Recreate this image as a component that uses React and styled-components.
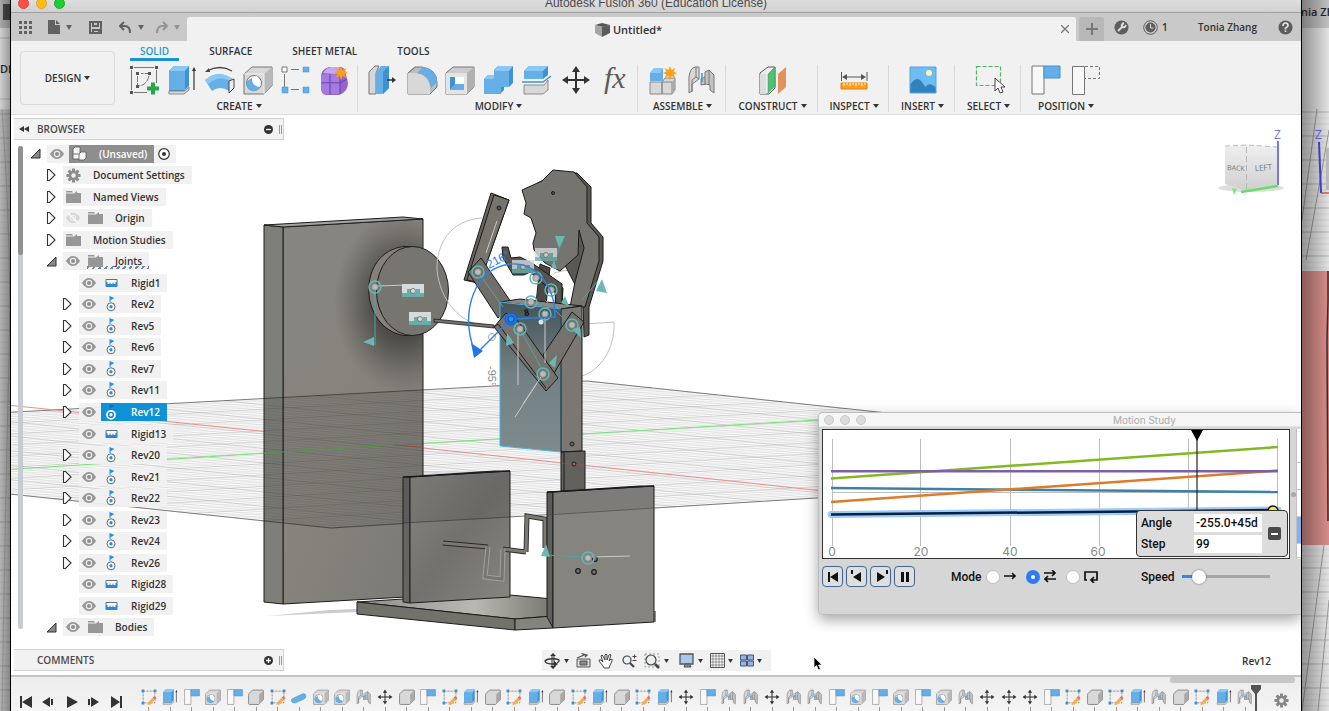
import React from "react";
import styled, { createGlobalStyle, css } from "styled-components";

const Global = createGlobalStyle`
  *, *::before, *::after { box-sizing: border-box; }
  html, body { margin: 0; height: 100%; overflow: hidden; }
  body { font-family: "Open Sans", "Noto Sans", sans-serif; font-size: 10px; font-weight: 600; color: #333; background: #a8a8a8; }
  button { font: inherit; color: inherit; background: none; border: 0; padding: 0; margin: 0; }
  svg { display: block; flex: none; }
  ul { list-style: none; margin: 0; padding: 0; }
`;

/* ---------- page frame ---------- */
const Desktop = styled.div`
  display: grid;
  grid-template-columns: 11px minmax(0, 1fr) 28px;
  height: 100vh;
  overflow: hidden;
`;
const Behind = styled.div`
  position: relative;
  overflow: hidden;
  white-space: nowrap;
  font-size: 11px;
  background: #b4b4b4;
  ${(p) => p.$side === "left"
    ? css`border-right: 1px solid #000;`
    : css`border-left: 1px solid #000;`}
`;
const BehindDrawing = styled.svg`
  width: 100%;
  height: 100%;
`;
const BehindText = styled.span`
  position: absolute;
  top: ${(p) => p.$top}px;
  ${(p) => p.$side}: ${(p) => p.$offset}px;
  line-height: 16px;
  color: #222;
`;
const AppWindow = styled.main`
  display: flex;
  flex-direction: column;
  min-width: 0;
  background: #fff;
`;
const TitleBar = styled.header`
  flex: none;
  display: grid;
  grid-template-columns: 1fr auto 1fr;
  grid-template-rows: 12px;
  align-items: end;
  height: 13px;
  overflow: hidden;
  border-bottom: 1px solid #a0a0a0;
  background: linear-gradient(#dedede, #d0d0d0);
  font: 400 12px/17px "Liberation Sans", Arial, sans-serif;
  color: #4a4a4a;
`;
const Lights = styled.div`
  display: flex;
  gap: ${(p) => p.$gap}px;
  padding-left: 7px;
  align-self: center;
`;
const Light = styled.button`
  width: 11px;
  height: 11px;
  border-radius: 50%;
  background: ${(p) => p.$color};
  border: 1px solid ${(p) => p.$edge};
`;
const TitleLights = styled(Lights)`
  align-self: end;
  padding-bottom: 3px;
`;

/* ---------- document tab strip ---------- */
const Strip = styled.div`
  flex: none;
  display: flex;
  align-items: flex-end;
  height: 28px;
  background: #c9c9c9;
`;
const Quick = styled.div`
  display: flex;
  align-items: center;
  width: 176px;
  height: 28px;
  padding-left: 6px;
  gap: 2px;
`;
const IconButton = styled.button`
  display: flex;
  align-items: center;
  justify-content: center;
  width: ${(p) => p.$w || 16}px;
  height: 24px;
  margin-right: ${(p) => p.$after || 0}px;
  opacity: ${(p) => (p.$dim ? 0.5 : 1)};
`;
const DocTab = styled.div`
  flex: 1;
  display: grid;
  grid-template-columns: 1fr auto 1fr;
  align-items: center;
  height: 24px;
  border-radius: 3px 3px 0 0;
  background: #f1f1f1;
  font-size: 11px;
  padding-right: 6px;
`;
const DocName = styled.span`
  grid-column: 2;
  display: flex;
  align-items: center;
  gap: 3px;
`;
const CloseTab = styled(IconButton)`
  justify-self: end;
  width: 10px;
`;
const NewTab = styled(IconButton)`
  width: 25px;
  margin-left: 3px;
  border-radius: 3px 3px 0 0;
  background: #b8b8b8;
`;
const Account = styled.div`
  display: flex;
  align-items: center;
  height: 28px;
  width: 197px;
  padding-left: 10px;
`;
const Jobs = styled.button`
  display: flex;
  align-items: center;
  gap: 4px;
  margin-left: 14px;
`;
const UserName = styled.button`
  margin: 0 21px 0 auto;
`;

/* ---------- ribbon ---------- */
const Ribbon = styled.div`
  flex: none;
  display: flex;
  height: 74px;
  padding: 2px 0 0 9px;
  background: #f1f1f1;
  border-bottom: 1px solid #dcdcdc;
`;
const Workspace = styled.button`
  width: 95px;
  height: 54px;
  margin: 8px 4px 0 0;
  border: 1px solid #d9d9d9;
  border-radius: 4px;
`;
const RibbonMain = styled.div`
  display: flex;
  flex-direction: column;
  min-width: 0;
`;
const TabList = styled.nav`
  display: flex;
  gap: 20px;
  padding-left: 11px;
`;
const RibbonTab = styled.button`
  height: 18px;
  line-height: 16px;
  padding: 0 10px;
  color: ${(p) => (p.$on ? "#2a9ad6" : "#333")};
  border-bottom: 3px solid ${(p) => (p.$on ? "#1b93d3" : "transparent")};
`;
const Groups = styled.div`
  display: flex;
`;
const Group = styled.section`
  flex: none;
  width: ${(p) => p.$w}px;
  height: 47px;
  margin-top: 4px;
  padding: 0 8px 0 10px;
  border-right: ${(p) => (p.$last ? 0 : 1)}px solid #d9d9d9;
`;
const Tools = styled.div`
  display: flex;
  justify-content: ${(p) => (p.$single ? "center" : "space-between")};
`;
const Tool = styled.button`
  width: 30px;
  height: 30px;
`;
const GroupMenu = styled.button`
  display: block;
  margin: 4px auto 0;
  height: 14px;
  line-height: 14px;
  white-space: nowrap;
`;

/* ---------- viewport ---------- */
const Viewport = styled.div`
  flex: 1;
  min-height: 0;
  position: relative;
  display: flex;
  justify-content: space-between;
  overflow: hidden;
`;
const SceneSvg = styled.svg`
  position: absolute;
  inset: 0;
  width: 100%;
  height: 100%;
`;
const SidePanel = styled.aside`
  position: relative;
  display: flex;
  flex-direction: column;
  width: 270px;
  margin-left: 3px;
  padding: 3px 0 4px;
`;
const PanelBar = styled.div`
  flex: none;
  display: flex;
  align-items: center;
  height: 22px;
  padding: 0 1px 0 5px;
  background: #f2f2f2;
  border: 1px solid #d2d2d2;
  border-width: 1px 1px 1px 0;
  color: #4a4a4a;
`;
const PanelTitle = styled.span`
  flex: 1;
  padding-left: ${(p) => (p.$indent ? 18 : 8)}px;
`;
const Grip = styled.span`
  width: 3px;
  height: 9px;
  margin-left: 6px;
  border: 1px solid #9a9a9a;
  border-width: 0 1px;
`;
const TreeArea = styled.div`
  flex: 1;
  display: flex;
  gap: 7px;
  min-height: 0;
  padding: 3px 0 11px 4px;
`;
const ScrollTrack = styled.div`
  width: 5px;
  margin: 3px 0 9px;
  border-radius: 3px;
  background: #c8cbcf;
`;
const ScrollThumb = styled.div`
  height: 109px;
  border-radius: 3px;
  background: #8f9092;
`;
const Tree = styled.ul`
  flex: 1;
  display: grid;
  grid-auto-rows: 1fr;
`;
const Row = styled.li`
  display: flex;
  align-items: center;
  padding-left: ${(p) => p.$level * 16}px;
`;
const Expander = styled.span`
  width: 17px;
  display: flex;
`;
const Chip = styled.span`
  display: flex;
  align-items: center;
  height: 18px;
  background: rgba(240, 240, 240, 0.94);
`;
const Eye = styled.button`
  width: 14px;
  margin: 0 5px 0 3px;
  opacity: ${(p) => (p.$off ? 0.3 : 1)};
`;
const NodeName = styled.button`
  display: flex;
  align-items: center;
  gap: 12px;
  height: 18px;
  padding: 0 7px 0 3px;
  white-space: nowrap;
  color: ${(p) => (p.$bg ? "#fff" : "#333")};
  background: ${(p) => p.$bg || "none"};
  ${(p) => p.$dotted && css`
    background: repeating-linear-gradient(-55deg, #6f82b6 0 2px, transparent 2px 5px) 2px 14px / 62px 3px no-repeat;
  `}
`;
const Activate = styled.button`
  margin: 0 6px 0 4px;
`;
const NavBar = styled.div`
  position: absolute;
  left: 531px;
  bottom: 4px;
  display: flex;
  align-items: center;
  gap: 7px;
  height: 21px;
  padding: 0 9px 0 2px;
  background: #f1f1f1;
`;
const NavButton = styled.button`
  display: flex;
  align-items: center;
  gap: 3px;
`;
const CornerStack = styled.div`
  position: relative;
  display: flex;
  flex-direction: column;
  justify-content: space-between;
  align-items: flex-end;
  padding: 10px 14px 7px 0;
`;
const SelectionName = styled.span`
  padding-right: 16px;
`;
const Pointer = styled.svg`
  position: absolute;
  left: 802px;
  bottom: 4px;
`;

/* ---------- motion study window ---------- */
const Study = styled.section`
  position: absolute;
  top: 297px;
  right: 0;
  width: 483px;
  height: 203px;
  overflow: hidden;
  border: 1px solid #bbb;
  border-right: 0;
  border-radius: 5px 0 0 5px;
  background: #d6d6d6;
  font: 500 12px/16px Roboto, sans-serif;
  color: #111;
`;
const StudyShadow = styled.div`
  position: absolute;
  top: 297px;
  right: 0;
  width: 483px;
  height: 203px;
  border-radius: 5px;
  box-shadow: 0 5px 14px rgba(0, 0, 0, 0.35);
`;
const StudyTitle = styled.header`
  display: flex;
  align-items: center;
  height: 14px;
  background: #f6f6f6;
  border-bottom: 1px solid #e2e2e2;
  font-family: Inter, sans-serif;
  font-size: 10px;
  font-weight: 400;
  color: #aaa;
`;
const StudyLights = styled(Lights)`
  padding-left: 5px;
`;
const StudyLight = styled(Light)`
  width: 10px;
  height: 10px;
`;
const StudyName = styled.span`
  margin-left: 247px;
`;
const StudyBody = styled.div`
  display: flex;
  margin: 2px 0 7px 3px;
`;
const ChartBox = styled.div`
  position: relative;
  width: 468px;
  height: 130px;
  border: 1px solid #333;
  background: #fff;
`;
const Splitter = styled.div`
  display: flex;
  align-items: center;
  justify-content: center;
  width: 6px;
  &::before { content: ""; width: 5px; height: 5px; border-radius: 50%; background: #a8a8a8; }
`;
const JointList = styled.div`
  flex: 1;
  display: grid;
  grid-template-rows: 34px 27px 27px 27px 14px;
  background: #fff;
  border-left: 1px solid #c0c0c0;
`;
const JointSlot = styled.div`
  border-bottom: 1px solid #ccc;
  background: ${(p) => (p.$on ? "#7db4ee" : "#fff")};
`;
const StepPopup = styled.form`
  position: absolute;
  right: 1px;
  bottom: 1px;
  display: grid;
  grid-template-columns: 53px 68px 1fr;
  grid-template-rows: 18px 18px;
  row-gap: 3px;
  align-items: center;
  width: 152px;
  height: 47px;
  padding: 3px 6px 3px 4px;
  border: 1px solid #333;
  border-radius: 4px;
  background: #dcdcdc;
`;
const Field = styled.input`
  grid-column: 2;
  width: 68px;
  height: 18px;
  padding: 0 2px;
  border: 0;
  border-radius: 0;
  background: #fff;
  font: inherit;
  color: #111;
`;
const RemoveStep = styled.button`
  grid-column: 3;
  grid-row: 1 / 3;
  justify-self: end;
  display: flex;
  align-items: center;
  justify-content: center;
  width: 13px;
  height: 13px;
  border-radius: 2px;
  background: #4a4a4a;
`;
const StudyControls = styled.div`
  display: flex;
  align-items: center;
  padding-left: 3px;
`;
const PlayButton = styled.button`
  display: flex;
  align-items: center;
  justify-content: center;
  width: 21px;
  height: 21px;
  margin-right: 3px;
  border: 1px solid #41658f;
  border-radius: 4px;
  background: #dedede;
`;
const ModeSet = styled.div`
  display: flex;
  align-items: center;
  margin: 0 35px 0 33px;
`;
const ModeName = styled.span`
  width: 35px;
`;
const ModeOption = styled.label`
  display: flex;
  align-items: center;
  gap: 4px;
  width: 40px;
`;
const Radio = styled.input`
  appearance: none;
  flex: none;
  width: 14px;
  height: 14px;
  margin: 0;
  border-radius: 50%;
  border: 1px solid #c0c0c0;
  background: #fff;
  &:checked { border: 5px solid #2f7bf6; }
`;
const SpeedLabel = styled.label`
  display: flex;
  align-items: center;
  gap: 7px;
`;
const Speed = styled.input`
  appearance: none;
  width: 88px;
  height: 14px;
  margin: 0;
  background: linear-gradient(90deg, #3b82f6 20%, #a6a6a6 20%) center / 100% 3px no-repeat;
  &::-webkit-slider-thumb {
    appearance: none;
    width: 14px;
    height: 14px;
    border-radius: 50%;
    background: #fff;
    box-shadow: 0 0 2px rgba(0, 0, 0, 0.6);
  }
`;

/* ---------- timeline ---------- */
const Timeline = styled.footer`
  flex: none;
  position: relative;
  display: flex;
  height: 36px;
  padding: 0 12px 0 7px;
  background: linear-gradient(#ececec, #f4f4f4);
  border-top: 2px solid #c4c4c4;
  overflow: hidden;
`;
const Transport = styled.div`
  display: flex;
  justify-content: space-between;
  width: 120px;
  padding: 13px 13px 0 0;
`;
const Features = styled.div`
  flex: 1;
  display: flex;
  padding-top: 12px;
`;
const Feature = styled.button`
  flex: 1;
  display: flex;
  flex-direction: column;
  align-items: center;
  min-width: 0;
  &::after { content: ""; width: 1px; height: 6px; margin-top: 2px; background: #999; }
`;
const Marker = styled.svg`
  margin: 8px 0 0 -5px;
`;
const TimelineGear = styled.button`
  padding-top: 12px;
  margin-left: auto;
`;
const TimelineScroll = styled.div`
  position: absolute;
  top: 0;
  right: 6px;
  width: 125px;
  height: 6px;
  border-radius: 3px;
  background: #c6c6c6;
`;
const TimelineEnd = styled.div`
  display: flex;
  width: 33px;
  flex: none;
`;

/* ---------- small shared drawings ---------- */
const Caret = ({ s = 6, c = "#333" }) => (
  <svg width={s} height={s - 1} viewBox="0 0 6 5"><path d="M0 0h6L3 5z" fill={c} /></svg>
);
const InlineCaret = styled.i`
  display: inline-block;
  margin-left: 3px;
  vertical-align: 2px;
  border: solid transparent;
  border-width: 4px 3px 0;
  border-top-color: #333;
`;
const Gear = ({ s = 14, c = "#8d8d8d" }) => (
  <svg width={s} height={s} viewBox="0 0 16 16">
    {[0, 45, 90, 135].map((a) => <rect key={a} x="6.4" y="0.5" width="3.2" height="15" rx="0.6" fill={c} transform={`rotate(${a} 8 8)`} />)}
    <circle cx="8" cy="8" r="5.2" fill={c} /><circle cx="8" cy="8" r="2.4" fill="#f1f1f1" />
  </svg>
);
const Folder = () => (
  <svg width="15" height="12" viewBox="0 0 15 12"><path d="M0 0h6l1 1.500H0zM0 2.500h8l3-2.500v2h4v10H0z" fill="#979797" /></svg>
);
const EyeIcon = ({ off }) => (
  <svg width="14" height="12" viewBox="0 0 14 12">
    <path d="M0 6Q3 1 7 1t7 5q-3 5-7 5T0 6z" fill="#979797" /><circle cx="7" cy="6" r="3.2" fill="#eee" /><circle cx="7" cy="6" r="2" fill="#8d8d8d" />
    {off && <path d="M1 0l12 12" stroke="#fff" strokeWidth="2" />}
  </svg>
);
const RigidIcon = () => (
  <svg width="15" height="14" viewBox="0 0 15 14"><path d="M2 3.500h11v7H2z" fill="#fff" stroke="#5a7086" /><path d="M2 6h1.500v2h2V6.500h1V8h2V6.500h1V8h2V6H13v5H2z" fill="#2f86d6" /></svg>
);
const RevIcon = ({ on }) => (
  <svg width="15" height="16" viewBox="0 0 15 16">
    <path d="M5.500 0L10.500 2 6.500 4.200V6h-1z" fill={on ? "#0a6fc0" : "#1e90f0"} />
    <circle cx="7" cy="10.800" r="4" fill={on ? "#0d7cc4" : "#fff"} stroke={on ? "#fff" : "#666"} strokeWidth={on ? 1.8 : 1} />
    <circle cx="7" cy="10.800" r="1.700" fill={on ? "#fff" : "#1e90f0"} />
  </svg>
);
const DocIcon = () => (
  <svg width="15" height="15" viewBox="0 0 15 15" fill="#f4f4f4" stroke="#555" strokeWidth=".8">
    <path d="M1 3l2-2h5v11l-1 1H1z" /><path d="M7 8l2-2h5v6l-2 2H7z" /><path d="M1 8h6" fill="none" />
  </svg>
);

/* ---------- tool drawings, 30 by 30 ---------- */
const B = "#66aee6", B2 = "#3f92d2", B3 = "#8cc8f5", G = "#d8d8d8", K = "#777";
const star = (x, y) => (
  <path transform={`translate(${x} ${y})`} d="M0-7L1.600-3 5.500-5 3.600-1.400 7 0 3.600 1.400 5.500 5 1.600 3 0 7-1.600 3-5.500 5-3.600 1.400-7 0-3.600-1.400-5.500-5-1.600-3z" fill="#f9a01b" />
);
const art = {
  sketch: <g fill="none" stroke={K}><path d="M5 2.500h20M2.500 5v20M27.500 5v13M5 27.500h13" /><path d="M8.500 11v10q10 0 12-12.500H12" strokeDasharray="6 1" />
    <g fill="#555" stroke="none"><path d="M1 1h3v3H1zM26 1h3v3h-3zM1 26h3v3H1zM7 7h3v3H7zM19 7h3v3h-3zM7 20h3v3H7z" /><path d="M22 17.500h4v4h4v4h-4v4h-4v-4h-4v-4h4z" fill="#25a84a" /></g></g>,
  extrude: <g><path d="M2 6l5-5h15v20l-5 5H2z" fill={B2} /><path d="M2 6h16v19H2z" fill={B} /><path d="M2 6l5-5h15l-4 5z" fill={B3} /><path d="M2 26h16l4-4v3l-5 4H2z" fill={G} stroke={K} strokeWidth=".8" /><path d="M27 25V4" stroke="#333" strokeWidth="1.200" /><path d="M25 6l2-4 2 4z" fill="#333" /></g>,
  revolve: <g><path d="M2 6Q15-1 27 6" fill="none" stroke="#444" strokeWidth="1.300" /><path d="M0 7l4-4 1 4z" fill="#444" /><path d="M0 15Q14 3 29 15l-5 11Q15 20 7 26z" fill={B} /><path d="M0 15Q14 3 29 15l-2 2Q14 9 3 19z" fill={B3} /><path d="M24 16l5-2v9l-5 5z" fill="#eee" stroke="#444" /></g>,
  hole: <g><path d="M1 9l8-7h20v19l-8 8H1z" fill={G} stroke={K} /><path d="M21 9l8-7v19l-8 8z" fill="#b9b9b9" /><path d="M1 9h20v20" fill="none" stroke="#eee" /><circle cx="11" cy="18" r="7.500" fill="#eee" stroke={K} /><path d="M4 16a7 7 0 1 0 13 6q-8-1-8-9z" fill={B} /><path d="M9 13a8 8 0 0 0 8 9l1-5-4-6z" fill="#fff" /></g>,
  pattern: <g stroke={K}><path d="M3.500 9v13M10 4.500h8M10 24.500h8" /><path d="M1 2h5v5H1z" fill="#fff" /><g fill={B} stroke={B2} strokeWidth=".5"><path d="M22 2h6v5h-6zM1 22h6v6H1zM22 22h6v6h-6z" /></g></g>,
  form: <g><path d="M2 10q1-6 8-8h12q5 1 5 8l2 8q0 6-5 10l-4 2H7q-5-1-5-7z" fill="#9363cf" /><path d="M2 10q6-2 19 0v19H7q-5-1-5-7z" fill="#a67be0" /><path d="M4 8q3-5 8-6h9q-2 6-4 7z" fill="#c7a8f2" /><path d="M11 9v20M2 18q9-1 19 0l7-4M21 10v19" fill="none" stroke="#6f46ad" strokeWidth="1.200" />{star(22, 8)}</g>,
  press: <g><path d="M1 7l6-6h4L8 8v21H1z" fill={G} stroke={K} /><path d="M8 7l5-6h8v22l-6 6H8z" fill={B} /><path d="M15 7l6-6v22l-6 6z" fill={B2} /><path d="M19 15h7" stroke="#333" strokeWidth="1.500" /><path d="M24 12l4 3-4 3z" fill="#333" /></g>,
  fillet: <g><path d="M1 8l7-6h7q15 2 15 16v4l-7 7H1z" fill="#bdbdbd" stroke={K} /><path d="M1 8h8q13 2 14 15v6H1z" fill={G} /><path d="M10 8l6-6q13 2 14 15l-6 6Q22 10 10 8z" fill={B} /><path d="M1 8l7-6" stroke={K} /></g>,
  shell: <g><path d="M1 8l7-6h21v20l-7 7H1z" fill="#ccc" stroke={K} /><path d="M22 8l7-6v20l-7 7z" fill="#b0b0b0" /><path d="M1 8h21v21H1z" fill="#e4e4e4" /><path d="M5 12h14v13H5z" fill="#fff" /><path d="M5 12h5v8l-5 5z" fill={B2} /><path d="M10 19h9v6H5z" fill={B} /></g>,
  combine: <g><path d="M0 14l4-4h6V5l4-4h15v17l-4 4h-5v3l-4 4H0z" fill={B2} /><path d="M0 14h10V6h15v16H17v7H0z" fill={B} /><path d="M10 6l4-5h15l-4 5zM0 14l4-4h6v4z" fill={B3} /></g>,
  split: <g><path d="M2 6l5-5h19v9l-5 4H2z" fill={B2} /><path d="M2 6h19v8H2z" fill={B} /><path d="M2 6l5-5h19l-5 5z" fill={B3} /><path d="M0 17h21l8-6" fill="none" stroke={B2} strokeWidth="1.300" /><path d="M2 20h20l4-5v10l-5 4H2z" fill={G} stroke={K} strokeWidth=".8" /></g>,
  move: <g fill="#333"><path d="M14 5h2v20h-2z" /><path d="M5 14h20v2H5z" /><path d="M15 1l4 6h-8zM15 29l4-6h-8zM1 15l6-4v8zM29 15l-6-4v8z" /></g>,
  fx: <text x="5" y="23" fontFamily="Liberation Serif, serif" fontStyle="italic" fontSize="30" fontWeight="400" fill="#5c5c5c">fx</text>,
  assemble: <g><path d="M2 8l4-5h9v13H2z" fill={B} /><path d="M2 8l4-5h9l-3 5z" fill={B3} /><path d="M2 17h12v12H2zM14 17l3-4h10v12l-3 4H14z" fill={G} stroke="#888" /><path d="M14 17h10v12" fill="none" stroke="#888" /><path d="M24 17l3-4v12l-3 4z" fill="#aaa" />{star(22, 8)}</g>,
  joint: <g stroke="#777"><path d="M2 12Q3 3 8 2h4v12l-4 3-3 2v7l-3 2z" fill={G} /><path d="M9 2v10l-4 3v12M9 12l3 2" fill="none" /><path d="M14 14l4-2V7l4-2 5 5v18l-4-3v-5l-4-1-5 1z" fill="#c4c4c4" /><path d="M18 12v8M22 5v15" fill="none" /><path d="M15 17V8" stroke={B2} strokeWidth="1.500" fill="none" /></g>,
  construct: <g><path d="M2 8l8-6h7v21l-6 6H2z" fill="#eee" stroke="#555" /><path d="M2 9h6v20H2z" fill="#ddd" /><path d="M10 9l7-7v19l-7 7z" fill="#53be76" stroke="#35995a" strokeWidth=".5" /><path d="M20 9l8-7v20l-8 7z" fill="#e3915d" /></g>,
  inspect: <g stroke="#555"><path d="M2.500 7v9M28 7v9M5 12h20" /><path d="M3 12l5-3v6zM27 12l-5-3v6z" fill="#555" stroke="none" /><path d="M2 18h26v6H2z" fill="#fa9f1e" stroke="#e08500" /><path d="M5 18v3M8 18v2M11 18v3M14 18v2M17 18v3M20 18v2M23 18v3M26 18v2" stroke="#fff" strokeWidth="1" /></g>,
  insert: <g><path d="M2 2h26v26H2z" fill="#6dbdf3" /><circle cx="21" cy="8" r="3" fill="#fff5b8" /><path d="M2 20q8-13 15 2 5-6 11 1v5H2z" fill="#3183bd" /><path d="M2 2h26v26H2z" fill="none" stroke="#5da3d2" /></g>,
  select: <g><path d="M2.500 1.500h24v19h-24z" fill="none" stroke="#4db45b" strokeWidth="1.200" strokeDasharray="4 2" /><path d="M21 13v13l3-3 2 5 3-1-2-5h4z" fill="#fff" stroke="#444" /></g>,
  position: <g><path d="M1 1h12v28H1z" fill="#f8f8f8" stroke={K} /><path d="M13 1h16v12H13z" fill={B} stroke={B2} /></g>,
  revert: <g><path d="M1.500 1.500h12v28h-12z" fill="#f8f8f8" stroke={K} /><path d="M14 1.500h14.500v12H14" fill="none" stroke={K} strokeDasharray="3 2" /></g>,
  body: <g><path d="M1 12q0-4 3-6l5-4h19q1 0 1 2v16l-9 9H3q-2 0-2-2z" fill={G} stroke={K} strokeWidth="1.500" /><path d="M21 10l8-7v17l-8 8z" fill="#aaa" /></g>,
  tsketch: <g><path d="M4 4h22v22H4z" fill="none" stroke={K} strokeDasharray="4 2" strokeWidth="1.500" /><g fill={B2}><path d="M1 1h5v5H1zM24 1h5v5h-5zM1 24h5v5H1z" /></g><path d="M14 25l8-9 4 4-8 9-6 1z" fill="#f4b04c" /><path d="M22 16l3-3 4 4-3 3z" fill="#ec6b5e" /></g>,
  fill: <g><path d="M3 18L22 9q6-1 6 4 0 5-6 7L8 26q-6 1-7-3t2-5z" fill={B} stroke={B2} /></g>,
};
const Art = ({ name, size = 30 }) => <svg width={size} height={size} viewBox="0 0 30 30" overflow="visible">{art[name]}</svg>;

/* ---------- data ---------- */
const groups = [
  ["CREATE", 239, ["sketch", "extrude", "revolve", "hole", "pattern", "form"]],
  ["MODIFY", 280, ["press", "fillet", "shell", "combine", "split", "move", "fx"]],
  ["ASSEMBLE", 88, ["assemble", "joint"]],
  ["CONSTRUCT", 92, ["construct"]],
  ["INSPECT", 71, ["inspect"]],
  ["INSERT", 66, ["insert"]],
  ["SELECT", 66, ["select"]],
  ["POSITION", 88, ["position", "revert"]],
];
const joint = (n) => ({ level: 2, label: n, kind: n.startsWith("Rigid") ? "rigid" : "rev", eye: true, closed: !n.startsWith("Rigid"), on: n === "Rev12" });
const nodes = [
  { level: 0, label: "(Unsaved)", kind: "doc", eye: true, open: true, root: true },
  { level: 1, label: "Document Settings", kind: "gear", closed: true },
  { level: 1, label: "Named Views", kind: "folder", closed: true },
  { level: 1, label: "Origin", kind: "folder", eye: true, off: true, closed: true },
  { level: 1, label: "Motion Studies", kind: "folder", closed: true },
  { level: 1, label: "Joints", kind: "folder", eye: true, open: true, dotted: true },
  ...["Rigid1", "Rev2", "Rev5", "Rev6", "Rev7", "Rev11", "Rev12", "Rigid13", "Rev20", "Rev21", "Rev22", "Rev23", "Rev24", "Rev26", "Rigid28", "Rigid29"].map(joint),
  { level: 1, label: "Bodies", kind: "folder", eye: true, open: true },
];
const codes = { s: "tsketch", e: "extrude", p: "position", h: "hole", b: "body", f: "fill", j: "joint", m: "move" };
const history = "sephpbsfhhjmbpsebsebsebsempjjmjjphphphjmmmpsbsejbsej".split("");
const kinds = { doc: <DocIcon />, gear: <Gear s={15} />, folder: <Folder />, rigid: <RigidIcon /> };

/* ---------- the model ---------- */
const lerp = (a, b, t) => [a[0] + (b[0] - a[0]) * t, a[1] + (b[1] - a[1]) * t];
const floor = { l: [-501, 440], b: [587, 381], r: [1366, 464], f: [331, 528] };
const gridPath = (every) => {
  let d = "";
  for (let i = 0; i <= 60; i += 1) {
    if ((i % 5 === 0) !== every) continue;
    const t = i / 60;
    const p = [lerp(floor.l, floor.b, t), lerp(floor.f, floor.r, t), lerp(floor.l, floor.f, t), lerp(floor.b, floor.r, t)];
    d += `M${p[0]}L${p[1]}M${p[2]}L${p[3]}`;
  }
  return d;
};
const Floor = () => (
  <g fill="none">
    <path d={gridPath(false)} stroke="#000" strokeOpacity=".1" strokeWidth=".6" />
    <path d={gridPath(true)} stroke="#000" strokeOpacity=".2" strokeWidth=".7" />
  </g>
);
const Ring = ({ x, y, c = "#5fb9b9", r = 6 }) => (
  <g><circle cx={x} cy={y} r={r} fill="none" stroke={c} strokeWidth="1.500" /><circle cx={x} cy={y} r="3.300" fill="#b9bcbb" stroke="#777" strokeWidth=".7" /></g>
);
const Tag = ({ x, y, o = 1 }) => (
  <g transform={`translate(${x} ${y})`} opacity={o}><path d="M0 0h22v13H0z" fill="#d5dada" /><path d="M0 9h5V5h4v4h5V5h4v4h4v4H0z" fill="#66adab" /><circle cx="11" cy="7" r="2.500" fill="#ddd" stroke="#555" strokeWidth=".7" /></g>
);
const Scene = () => (
  <SceneSvg viewBox="11 115 1290 560" preserveAspectRatio="xMidYMid slice" role="img" aria-label="Model">
    <defs>
      <linearGradient id="panel" x1="0" y1="0" x2="1" y2="1"><stop offset="0" stopColor="#868681" /><stop offset=".5" stopColor="#86837c" /><stop offset="1" stopColor="#7a7975" /></linearGradient>
      <radialGradient id="shade"><stop offset=".4" stopColor="#2b2b29" stopOpacity=".85" /><stop offset=".65" stopColor="#333331" stopOpacity=".5" /><stop offset="1" stopColor="#4b4b49" stopOpacity="0" /></radialGradient>
      <linearGradient id="bluebox" x1="0" y1="0" x2="0" y2="1"><stop offset="0" stopColor="#45545a" /><stop offset=".5" stopColor="#748184" /><stop offset="1" stopColor="#7e8a8c" /></linearGradient>
      <linearGradient id="wall" x1="0" y1="0" x2="1" y2="1"><stop offset="0" stopColor="#888680" /><stop offset=".5" stopColor="#72716d" /><stop offset="1" stopColor="#868580" /></linearGradient>
      <linearGradient id="plate" x1="0" y1="0" x2="1" y2="0"><stop offset="0" stopColor="#8e8e88" /><stop offset=".6" stopColor="#b9b9b2" /><stop offset="1" stopColor="#77776f" /></linearGradient>
      <clipPath id="panelClip"><path d="M264 225L403 217 423 219V471L510 471V597L264 604z" /></clipPath>
    </defs>
    <path d={`M${floor.l}L${floor.b} ${floor.r} ${floor.f}z`} fill="#f9f9f9" stroke="#777" strokeWidth=".8" />
    <Floor />
    <path d="M-100 394L395 445 1000 510" fill="none" stroke="#f28a8a" /><path d="M0 470L395 445 885 416" fill="none" stroke="#74e574" />
    <path d="M267 616L330 610 357 609 357 612z" fill="#ccc" />
    <g stroke="#1c1c1b" strokeWidth="1" strokeLinejoin="round">
      <path d="M283 227L423 219V596L283 604z" fill="url(#panel)" />
      <path d="M264 225L283 227V604L264 602z" fill="#7e7f7a" />
      <path d="M264 225L403 217 423 219 283 227z" fill="#a5a5a0" />
      <g clipPath="url(#panelClip)"><ellipse cx="402" cy="302" rx="68" ry="90" fill="url(#shade)" stroke="none" opacity=".75" /></g>
      <path d="M411 246.500h-7C356 252 358 328 404 335.500h9z" fill="#85817a" />
      <ellipse cx="412.500" cy="291" rx="36" ry="44.500" fill="#777570" />
    </g>
    <g clipPath="url(#panelClip)">
      <path d={`M${floor.l}L${floor.b} ${floor.r} ${floor.f}z`} fill="#333" fillOpacity=".07" stroke="#222" strokeWidth=".7" strokeOpacity=".7" /><g opacity=".75"><Floor /></g>
      <path d="M200 457L395 445" stroke="#4c9c45" /><path d="M395 445L430 448" stroke="#93533f" />
    </g>
    <g fill="none" stroke="#c0c0c0"><path d="M482 218C450 220 436 245 437 270c3 30 23 55 53 57" /><path d="M614 322c1 28-14 48-32 54M572 325l42-3M554 273q15-5 30-1" /></g>
    <g stroke="#1b1b1a" strokeWidth="1" strokeLinejoin="round">
      <path d="M526 190L557 172 577 173 591 187V223L603 237V261L589 307V335L584 337 583 300z" fill="#595853" />
      <path d="M522 190L542 181 553 170 574 172 587 187V223L599 237V261L585 307H570L575 282 584 248 579 230 578 255 560 271 545 263 534 250 533 243 536 233 531 218 524 214 526 203z" fill="#76746f" />
      <path d="M540 264l10 4-4 37-10-1zM556 284l7 4-1 20-7-2z" fill="#4a4946" />
      <path d="M502 247h6l3 11 9-1 12 6 30 21v19l-6 2-1-13-10-7-15-13-6 3h-11l-10-17z" fill="#565550" />
      <circle cx="553" cy="193" r="1.500" fill="#555" />
      <path d="M434 319L494 325V328L434 322z" fill="#77736b" strokeWidth=".8" />
      <path d="M491 193l18 7-22 62-9 21-14-3z" fill="#66645f" /><path d="M494 195l15 5-22 62-6 21-14-3z" fill="#77746d" />
      <circle cx="499" cy="208" r="2" fill="#555" />
      <path d="M468 272l13-14 30 44-13 16z" fill="#706e69" />
      <path d="M500 302L520 299 582 306 561 309z" fill="#8a8a85" />
      <path d="M500 302L561 309V452L500 446z" fill="url(#bluebox)" stroke="#4fb2e5" />
      <path d="M561 309L582 306V451L561 452z" fill="#7b7873" />
      <circle cx="572" cy="444" r="2" fill="#666" />
      <path d="M543 355l29-43 12 10-31 53z" fill="#74726d" />
      <path d="M494 327l12-14 11 7 41 58-12 13z" fill="#74736f" /><path d="M494 327l4-3 48 64" fill="none" />
      <path d="M561 452L585 451V490L561 491z" fill="#62615d" /><path d="M564 452v39" /><circle cx="574" cy="464" r="2" fill="#777" />
    </g>
    <g stroke="#1c1c1b" strokeLinejoin="round">
      <path d="M357 602L403 599 510 595 553 599V616L515 619z" fill="url(#plate)" />
      <path d="M357 602L515 619V630L357 614z" fill="#72726b" /><path d="M515 619L553 616V628L515 630z" fill="#84847e" />
      <path d="M403 477L410 477V603L403 602z" fill="#646461" />
      <path d="M410 477L510 471V597L410 603z" fill="url(#wall)" />
      <path d="M403 477L495 471 510 471 410 477z" fill="#333" />
    </g>
    <path d="M403 523L510 517V471L403 477z" fill="#222" opacity=".1" /><path d="M403 523L510 517" stroke="#333" strokeWidth=".6" />
    <path d="M443 543L488 547M526 552L503 549M526 552L527 516 545 519V548" fill="none" stroke="#2b2b29" strokeWidth="5" />
    <path d="M443 543L488 547M526 552L503 549M526 552L527 516 545 519V548" fill="none" stroke="#7c7973" strokeWidth="3.200" />
    <path d="M488 547L485 577 502 579 503 549" fill="none" stroke="#a3a19b" strokeWidth="5" /><path d="M488 547L485 577 502 579 503 549" fill="none" stroke="#777570" strokeWidth="3" />
    <g stroke="#1c1c1b" strokeLinejoin="round">
      <path d="M547 492L553 492V628L547 617z" fill="#5f5f5b" />
      <path d="M553 492L654 486V622L553 628z" fill="#86847f" />
      <path d="M547 492L640 486 654 486 553 492z" fill="#222" /><path d="M655 611v11" fill="none" />
      <g fill="#777" strokeWidth="1.200"><circle cx="595" cy="559" r="2.300" /><circle cx="578" cy="571" r="2.300" /><circle cx="594" cy="572" r="2.300" /></g>
    </g>
    <path d="M547 515L654 508V486L547 492z" fill="#222" opacity=".07" /><path d="M547 515L654 508" stroke="#444" strokeWidth=".6" />
    <path d="M561 463L654 472" stroke="#b4504a" strokeWidth=".7" opacity=".7" strokeDasharray="24 69" />
    <g fill="none" stroke="#c9c9c6"><path d="M497 221l-11 32M518 330v55M515 417l22-34M543 374l-20 30M545 318v45M592 557l38-1M378 286l28-1" /></g>
    <g fill="none" stroke="#4fa5a5"><path d="M375 287v58M478 272l25 35M520 329l24 44M545 300l20 20M582 300l15-18M545 555l40 2M555 258l8-18" /></g>
    <g fill="#69b8b7"><path d="M363 342l11-5v9zM555 236h10l-6 12zM602 279l5 14-11-2zM565 296l4 10-8-3zM507 333l7 10-8 3zM557 355l-8 8 6 5zM541 556l5-12 4 13zM581 338l-9-9 8-2zM551 268l6 1-3-9z" /></g>
    <Tag x={402} y={284} /><Tag x={409} y={312} /><Tag x={535} y={248} o={0.8} /><Tag x={512} y={260} o={0.8} />
    {[[375, 287], [478, 272], [536, 278], [551, 290], [531, 302], [545, 314], [520, 329], [572, 325], [543, 374], [588, 558]].map(([x, y]) => <Ring key={x} x={x} y={y} />)}
    <circle cx="492" cy="337" r="3.500" fill="none" stroke="#aaa" /><circle cx="541" cy="322" r="2.500" fill="#cfeaf6" />
    <text x="524" y="316" fontSize="9" fontWeight="700" fill="#111" transform="rotate(-12 526 313)">8</text>
    <g fill="none" stroke="#2f7fe8" strokeWidth="1.400"><path d="M474 350C460 310 475 268 510 264c25-2 45 20 45 53L511 319 474 356" /></g>
    <path d="M471 343l12 8-9 7z" fill="#1d79ec" /><circle cx="511" cy="319" r="6" fill="#1675ea" stroke="#0d63d4" /><circle cx="511" cy="319" r="3" fill="#4189dc" stroke="#0c55b5" />
    <text x="489" y="269" transform="rotate(-28 489 269)" fontFamily="Liberation Sans, sans-serif" fontSize="12" fontWeight="400" fill="#2f7fe8">216°</text>
    <text x="488" y="366" transform="rotate(90 488 366)" fontFamily="Liberation Sans, sans-serif" fontSize="11" fontWeight="400" fill="#888">-95°</text>
  </SceneSvg>
);

const ViewCube = () => (
  <svg width="70" height="78" viewBox="1217 125 70 78">
    <defs><linearGradient id="cubeR" x1="0" y1="0" x2="0" y2="1"><stop offset="0" stopColor="#efefef" /><stop offset="1" stopColor="#cfcfcf" /></linearGradient></defs>
    <ellipse cx="1251" cy="188" rx="33" ry="4" fill="#ddd" />
    <path d="M1225 146L1247 145V191L1225 184z" fill="url(#cubeR)" /><path d="M1247 145L1278 147V186L1247 191z" fill="url(#cubeR)" />
    <path d="M1225 146L1247 145 1278 147" fill="none" stroke="#bbb" strokeDasharray="5 3" /><path d="M1246.500 147v43" stroke="#b5b5b5" strokeDasharray="6 3" />
    <path d="M1278 141v44" stroke="#7676f2" strokeWidth="2" /><path d="M1241 192L1278 186" stroke="#65df65" strokeWidth="2.500" /><path d="M1232 188l5 1-3 6z" fill="#7be87b" />
    <text x="1274" y="139" fontSize="12" fontWeight="400" fill="#7676f2">Z</text>
    <text x="1227" y="170" fontSize="7" fontWeight="400" fill="#777" transform="rotate(3 1227 170)">BACK</text>
    <text x="1255" y="171" fontSize="8" fontWeight="400" fill="#777" transform="rotate(-4 1255 171)">LEFT</text>
  </svg>
);

const Chart = () => (
  <svg width="466" height="128" viewBox="823 431 466 128" fill="none">
    <g stroke="#bdbdbd">{[832.5, 920.5, 1010.5, 1099.5, 1188.5, 1277.5].map((x) => <path key={x} d={`M${x} 440V547`} />)}<path d="M832 493.500H1277" /></g>
    <g strokeWidth="2.500">
      <path d="M831 479.500L1278 448" stroke="#82b923" /><path d="M831 489L1278 493" stroke="#3d80a8" /><path d="M831 503L1278 471.500" stroke="#dc7c2b" /><path d="M831 472.300H1278" stroke="#7b5fa8" />
    </g>
    <path d="M831 515.500L1278 511" stroke="#9ecbf7" strokeWidth="7" strokeLinecap="round" /><path d="M831 515.500L1278 511" stroke="#06203f" strokeWidth="2.500" />
    <circle cx="1273" cy="512" r="5" fill="#f7ea2d" stroke="#111" strokeWidth="1.500" />
    <path d="M1197 431v90" stroke="#222" strokeWidth="1.200" /><path d="M1191 431h12l-6 11z" fill="#000" />
    <g fontFamily="Inter, sans-serif" fontSize="12" fontWeight="400" fill="#888" textAnchor="middle">
      <text x="832" y="557">0</text><text x="921" y="557">20</text><text x="1010" y="557">40</text><text x="1098" y="557">60</text>
    </g>
  </svg>
);

const navTools = [
  ["Orbit", true, <svg width="17" height="16" viewBox="0 0 17 16" fill="none" stroke="#333"><path d="M8 2v12M10 2v12" /><path d="M9 0l3 3H6zM9 16l3-3H6z" fill="#333" stroke="none" /><path d="M13 10q5-3-1-4Q4 5 1 8q0 3 9 3" strokeWidth="1.300" /><path d="M10 8l4 3-4 3z" fill="#333" stroke="none" /></svg>],
  ["Look at", false, <svg width="15" height="15" viewBox="0 0 15 15" fill="#ddd" stroke="#555"><path d="M1 6h13v8H1z" /><path d="M4 8h7v4H4z" fill="#888" /><path d="M1 5l7-3-1-1 4 1-2 2" fill="none" strokeWidth="1.300" /></svg>],
  ["Pan", false, <svg width="16" height="16" viewBox="0 0 16 16" fill="#fff" stroke="#444"><path d="M5 13L1 8q0-2 2-1l2 2-2-6q1-2 2 0l2 4V2q1-2 2 0v5l2-5q1-1 2 0l-2 6 2-2q2 0 1 2-2 4-3 7H6z" /></svg>],
  ["Zoom", false, <svg width="16" height="16" viewBox="0 0 16 16" fill="none" stroke="#444"><circle cx="6" cy="7" r="4" fill="#e9f3f5" strokeWidth="1.200" /><path d="M9 10l4 4" strokeWidth="2.200" /><path d="M11.500 3.500h4M13.500 1.500v4M11.500 7.500h4" /></svg>],
  ["Fit", true, <svg width="17" height="16" viewBox="0 0 17 16" fill="none" stroke="#444"><path d="M1 1h14v13H1z" strokeDasharray="2 2" stroke="#999" /><circle cx="7" cy="7" r="5" fill="#e6f1ef" strokeWidth="1.200" /><path d="M11 11l4 4" strokeWidth="2.500" /></svg>],
  ["Display", true, <svg width="19" height="15" viewBox="0 0 19 15" fill="#a8c8ed" stroke="#555"><path d="M4 1h13v10H4z" strokeWidth="1.300" /><path d="M8 14h7l-1-3H9z" fill="#888" /></svg>],
  ["Grid", true, <svg width="15" height="15" viewBox="0 0 15 15" stroke="#555" fill="#fff"><path d="M.5.5h14v14H.5z" /><path d="M3 0v15M6 0v15M9 0v15M12 0v15M0 3h15M0 6h15M0 9h15M0 12h15" strokeWidth=".6" /></svg>],
  ["Viewports", true, <svg width="14" height="13" viewBox="0 0 14 13" fill="#9ab3dc" stroke="#40577f"><path d="M.5 1h6v5h-6zM7.500 1h6v5h-6zM.5 7h6v5h-6zM7.500 7h6v5h-6z" /></svg>],
];
const transport = [
  ["Start", "M1 2h2v12H1zM13 2v12L3 8z"], ["Step back", "M1 8l8-5v10zM10 5h2v6h-2z"], ["Play", "M3 2l11 6-11 6z"], ["Step forward", "M2 5h2v6H2zM5 3l8 5-8 5z"], ["End", "M2 2l9 6-9 6zM11 2h2v12h-2z"],
];
const study = [
  ["To start", "M2 2h2v10H2zM12 2v10L4 7z"], ["Previous", "M1 0h2v4H1zM11 2v10L3 7z"], ["Next", "M12 0h2v4h-2zM3 2v10l8-5z"], ["Pause", "M3 2h3v10H3zM8 2h3v10H8z"],
];
const modes = [["Once", "M0 6h11M8 3l3 3-3 3"], ["Back and forth", "M0 3h11M8 0l3 3-3 3M12 9H1M4 6L1 9l3 3"], ["Loop", "M3 10H1V2h12v8H7M10 7l-3 3 3 3"]];

export default function App() {
  return (
    <>
      <Global />
      <Desktop>
        <Behind $side="left">
          <BehindDrawing viewBox="0 0 10 711" preserveAspectRatio="none">
            <defs><linearGradient id="ls"><stop offset="0" stopColor="#000" stopOpacity="0" /><stop offset="1" stopColor="#000" stopOpacity=".25" /></linearGradient></defs>
            <path d="M0 0h10v28H0z" fill="#a9a9a9" /><path d="M3 4h7v16H3z" fill="#444" /><path d="M0 28h10v82H0z" fill="#d0d0d0" /><path d="M0 38h10M0 99h10M0 110h10" stroke="#aaa" />
            {Array.from({ length: 100 }, (_, i) => <path key={i} d={`M0 ${114 + i * 6}h10`} stroke={i % 4 ? "#a9a9a9" : "#8a8a8a"} strokeWidth=".8" />)}
            <path d="M2 110Q12 250 9 360T2 711" fill="none" stroke="#999" /><path d="M0 0h10v711H0z" fill="url(#ls)" />
          </BehindDrawing>
          <BehindText $top={61} $side="left" $offset={0}>DI</BehindText>
        </Behind>

        <AppWindow>
          <TitleBar>
            <TitleLights $gap={7}>
              <Light aria-label="Close" $color="#fc4f48" $edge="#e0443e" /><Light aria-label="Minimise" $color="#fdbc13" $edge="#dea123" /><Light aria-label="Full screen" $color="#1fce33" $edge="#1aab29" />
            </TitleLights>
            <span>Autodesk Fusion 360 (Education License)</span>
          </TitleBar>

          <Strip>
            <Quick>
              <IconButton $after={11} aria-label="Data panel"><svg width="13" height="13" viewBox="0 0 13 13" fill="#616161"><path d="M0 0h3v3H0zM5 0h3v3H5zM10 0h3v3h-3zM0 5h3v3H0zM5 5h3v3H5zM10 5h3v3h-3zM0 10h3v3H0zM5 10h3v3H5zM10 10h3v3h-3z" /></svg></IconButton>
              <IconButton aria-label="File"><svg width="12" height="14" viewBox="0 0 12 14" fill="#616161"><path d="M0 0h7v5h5v9H0zM8 0l4 4H8z" /></svg></IconButton>
              <IconButton $w={10} $after={11} aria-label="File options"><Caret c="#616161" /></IconButton>
              <IconButton $after={11} aria-label="Save"><svg width="13" height="13" viewBox="0 0 13 13" fill="none" stroke="#616161" strokeWidth="2"><path d="M1 1h11v11H1zM4 1v4h5V1M4 12V9h6v3" /></svg></IconButton>
              <IconButton $w={18} aria-label="Undo"><svg width="13" height="12" viewBox="0 0 13 12" fill="none" stroke="#616161" strokeWidth="2"><path d="M5 1L1 5l4 4M1 5h5q5 0 5 7" /></svg></IconButton>
              <IconButton $w={10} $after={4} aria-label="Undo options"><Caret c="#616161" /></IconButton>
              <IconButton $w={18} $dim aria-label="Redo"><svg width="13" height="12" viewBox="0 0 13 12" fill="none" stroke="#616161" strokeWidth="2"><path d="M8 1l4 4-4 4M12 5H7q-5 0-5 7" /></svg></IconButton>
              <IconButton $w={10} $dim aria-label="Redo options"><Caret c="#616161" /></IconButton>
            </Quick>
            <DocTab>
              <DocName><svg width="15" height="15" viewBox="0 0 15 15"><path d="M0 3l7-2 8 2-7 2z" fill="#555" /><path d="M0 3l7 2v10l-7-4z" fill="#a5a5a5" /><path d="M7 5l8-2v8l-8 4z" fill="#5b5b5b" /></svg>Untitled*</DocName>
              <CloseTab aria-label="Close tab"><svg width="8" height="8" viewBox="0 0 8 8" stroke="#777" strokeWidth="1.300"><path d="M0 0l8 8M8 0L0 8" /></svg></CloseTab>
            </DocTab>
            <NewTab aria-label="New design"><svg width="12" height="12" viewBox="0 0 12 12" fill="#777"><path d="M5 0h2v5h5v2H7v5H5V7H0V5h5z" /></svg></NewTab>
            <Account>
              <IconButton $w={15} aria-label="Extensions"><svg width="15" height="15" viewBox="0 0 15 15"><circle cx="7.500" cy="7.500" r="7" fill="#5d5d5d" /><path d="M4 11l4-4M8 7q-1-3 2-4M8 7q3 1 4-2" stroke="#ddd" strokeWidth="2" fill="none" /></svg></IconButton>
              <Jobs><svg width="15" height="15" viewBox="0 0 15 15"><circle cx="7.500" cy="7.500" r="6.800" fill="#ccc" stroke="#5d5d5d" strokeWidth="1" /><circle cx="7.500" cy="7.500" r="5" fill="#5d5d5d" /><path d="M7.500 4v4h3" stroke="#ddd" fill="none" /></svg>1</Jobs>
              <UserName>Tonia Zhang</UserName>
              <IconButton $w={15} $after={8} aria-label="Help"><svg width="15" height="15" viewBox="0 0 15 15"><circle cx="7.500" cy="7.500" r="7" fill="#5d5d5d" /><path d="M5 6q0-3 2.500-3T10 5.500Q10 7 7.500 8v1.500M7.500 10.500V12" stroke="#e5e5e5" strokeWidth="1.700" fill="none" /></svg></IconButton>
            </Account>
          </Strip>

          <Ribbon>
            <Workspace>DESIGN<InlineCaret /></Workspace>
            <RibbonMain>
              <TabList><RibbonTab $on>SOLID</RibbonTab><RibbonTab>SURFACE</RibbonTab><RibbonTab>SHEET METAL</RibbonTab><RibbonTab>TOOLS</RibbonTab></TabList>
              <Groups>
                {groups.map(([name, w, tools]) => (
                  <Group key={name} $w={w} $last={name === "POSITION"}>
                    <Tools $single={tools.length === 1}>{tools.map((t) => <Tool key={t} aria-label={t}><Art name={t} /></Tool>)}</Tools>
                    <GroupMenu>{name}<InlineCaret /></GroupMenu>
                  </Group>
                ))}
              </Groups>
            </RibbonMain>
          </Ribbon>

          <Viewport>
            <Scene />
            <SidePanel>
              <PanelBar>
                <svg width="10" height="6" viewBox="0 0 10 6" fill="#333"><path d="M5 0v6L0 3zM10 0v6L5 3z" /></svg>
                <PanelTitle>BROWSER</PanelTitle>
                <svg width="9" height="9" viewBox="0 0 9 9"><circle cx="4.500" cy="4.500" r="4.500" fill="#333" /><path d="M2 4.500h5" stroke="#fff" strokeWidth="1.300" /></svg><Grip />
              </PanelBar>
              <TreeArea>
                <ScrollTrack><ScrollThumb /></ScrollTrack>
                <Tree>
                  {nodes.map((n) => (
                    <Row key={n.label} $level={n.level}>
                      <Expander>
                        {n.open && <svg width="11" height="11" viewBox="0 0 11 11"><path d="M10 1v9H1z" fill="#888" stroke="#333" /></svg>}
                        {n.closed && <svg width="10" height="14" viewBox="0 0 10 14"><path d="M1.500 1.500h2L9 7l-5.500 5.500h-2z" fill="#fff" stroke="#333" strokeWidth="1.100" /></svg>}
                      </Expander>
                      <Chip>
                        {n.eye && <Eye aria-label={"Show " + n.label} $off={n.off}><EyeIcon off={n.off} /></Eye>}
                        <NodeName $bg={n.root ? "#8e8e8e" : n.on ? "#0d92d8" : undefined} $dotted={n.dotted}>
                          {n.kind === "rev" ? <RevIcon on={n.on} /> : kinds[n.kind]}{n.label}
                        </NodeName>
                        {n.root && <Activate aria-label="Activate"><svg width="12" height="12" viewBox="0 0 12 12"><circle cx="6" cy="6" r="5.300" fill="#fff" stroke="#333" strokeWidth="1.200" /><circle cx="6" cy="6" r="2" fill="#333" /></svg></Activate>}
                      </Chip>
                    </Row>
                  ))}
                </Tree>
              </TreeArea>
              <PanelBar>
                <PanelTitle $indent>COMMENTS</PanelTitle>
                <svg width="9" height="9" viewBox="0 0 9 9"><circle cx="4.500" cy="4.500" r="4.500" fill="#333" /><path d="M2 4.500h5M4.500 2v5" stroke="#fff" strokeWidth="1.300" /></svg><Grip />
              </PanelBar>
            </SidePanel>

            <NavBar>{navTools.map(([name, menu, icon]) => <NavButton key={name} aria-label={name}>{icon}{menu && <Caret s={5} />}</NavButton>)}</NavBar>
            <Pointer width="10" height="15" viewBox="0 0 10 15"><path d="M1 1v11l2.500-2.500L5.500 14l2-1-2-4H9z" fill="#000" stroke="#fff" strokeWidth=".7" /></Pointer>
            <CornerStack><ViewCube /><SelectionName>Rev12</SelectionName></CornerStack>

            <StudyShadow />
            <Study>
              <StudyTitle>
                <StudyLights $gap={6}>{["Close study", "Minimise study", "Zoom study"].map((l) => <StudyLight key={l} aria-label={l} $color="#dcdcdc" $edge="#c8c8c8" />)}</StudyLights>
                <StudyName>Motion Study</StudyName>
              </StudyTitle>
              <StudyBody>
                <ChartBox>
                  <Chart />
                  <StepPopup>
                    <label htmlFor="angle">Angle</label><Field id="angle" defaultValue="-255.0+45d" />
                    <label htmlFor="step">Step</label><Field id="step" defaultValue="99" />
                    <RemoveStep type="button" aria-label="Remove step"><svg width="7" height="2" viewBox="0 0 7 2"><path d="M0 0h7v2H0z" fill="#fff" /></svg></RemoveStep>
                  </StepPopup>
                </ChartBox>
                <Splitter />
                <JointList><JointSlot /><JointSlot /><JointSlot /><JointSlot $on /><JointSlot /></JointList>
              </StudyBody>
              <StudyControls>
                {study.map(([n, d]) => <PlayButton key={n} aria-label={n}><svg width="14" height="14" viewBox="0 0 14 14"><path d={d} fill="#111" /></svg></PlayButton>)}
                <ModeSet role="radiogroup" aria-label="Mode">
                  <ModeName>Mode</ModeName>
                  {modes.map(([n, d], i) => <ModeOption key={n}><Radio type="radio" name="mode" aria-label={n} defaultChecked={i === 1} /><svg width="14" height="13" viewBox="0 0 14 13" fill="none" stroke="#111" strokeWidth="1.700"><path d={d} /></svg></ModeOption>)}
                </ModeSet>
                <SpeedLabel>Speed<Speed type="range" min="0" max="100" defaultValue="14" /></SpeedLabel>
              </StudyControls>
            </Study>
          </Viewport>

          <Timeline>
            <Transport>{transport.map(([n, d]) => <IconButton key={n} aria-label={n} $w={17}><svg width="16" height="16" viewBox="0 0 16 16"><path d={d} fill="#333" /></svg></IconButton>)}</Transport>
            <Features>{history.map((c, i) => <Feature key={i} aria-label={codes[c]}><Art name={codes[c]} size={16} /></Feature>)}</Features>
            <TimelineEnd>
              <Marker width="10" height="28" viewBox="0 0 10 28"><path d="M0 0h10v4L6 9v19H4V9L0 4z" fill="#555" /></Marker>
              <TimelineGear aria-label="Timeline settings"><Gear s={15} c="#888" /></TimelineGear>
            </TimelineEnd>
            <TimelineScroll />
          </Timeline>
        </AppWindow>

        <Behind $side="right">
          <BehindDrawing viewBox="0 0 27 711" preserveAspectRatio="none">
            <defs><linearGradient id="rs"><stop offset="0" stopColor="#000" stopOpacity=".35" /><stop offset="1" stopColor="#000" stopOpacity="0" /></linearGradient></defs>
            <path d="M0 0h27v28H0z" fill="#c0c0c0" /><path d="M0 28h27v81H0z" fill="#e2e2e2" /><path d="M0 109h27v602H0z" fill="#e2e2e2" />
            {Array.from({ length: 100 }, (_, i) => <path key={i} d={`M0 ${112 + i * 6}h27`} stroke={i % 4 ? "#d0d0d0" : "#aaa"} strokeWidth=".8" />)}
            <path d="M15 109L0 220M27 130L4 260M22 545L0 711M27 600L16 711" fill="none" stroke="#999" />
            <path d="M24 148h3v42h-3z" fill="#bbb" /><path d="M17 142l2 51" stroke="#4545dd" strokeWidth="2" /><path d="M19 193h8" stroke="#d55" strokeWidth="1.500" />
            <path d="M0 271h27v274H0z" fill="#d68d89" /><path d="M26 271v30l-1 40 1 180" fill="none" stroke="#3c2a2a" strokeWidth="1.500" />
            <path d="M0 0h27v711H0z" fill="url(#rs)" />
            <text x="13" y="139" fontSize="12" fontWeight="400" fill="#5a5ae0">Z</text>
          </BehindDrawing>
          <BehindText $top={4} $side="left" $offset={-1}>nia Zhang</BehindText>
        </Behind>
      </Desktop>
    </>
  );
}
